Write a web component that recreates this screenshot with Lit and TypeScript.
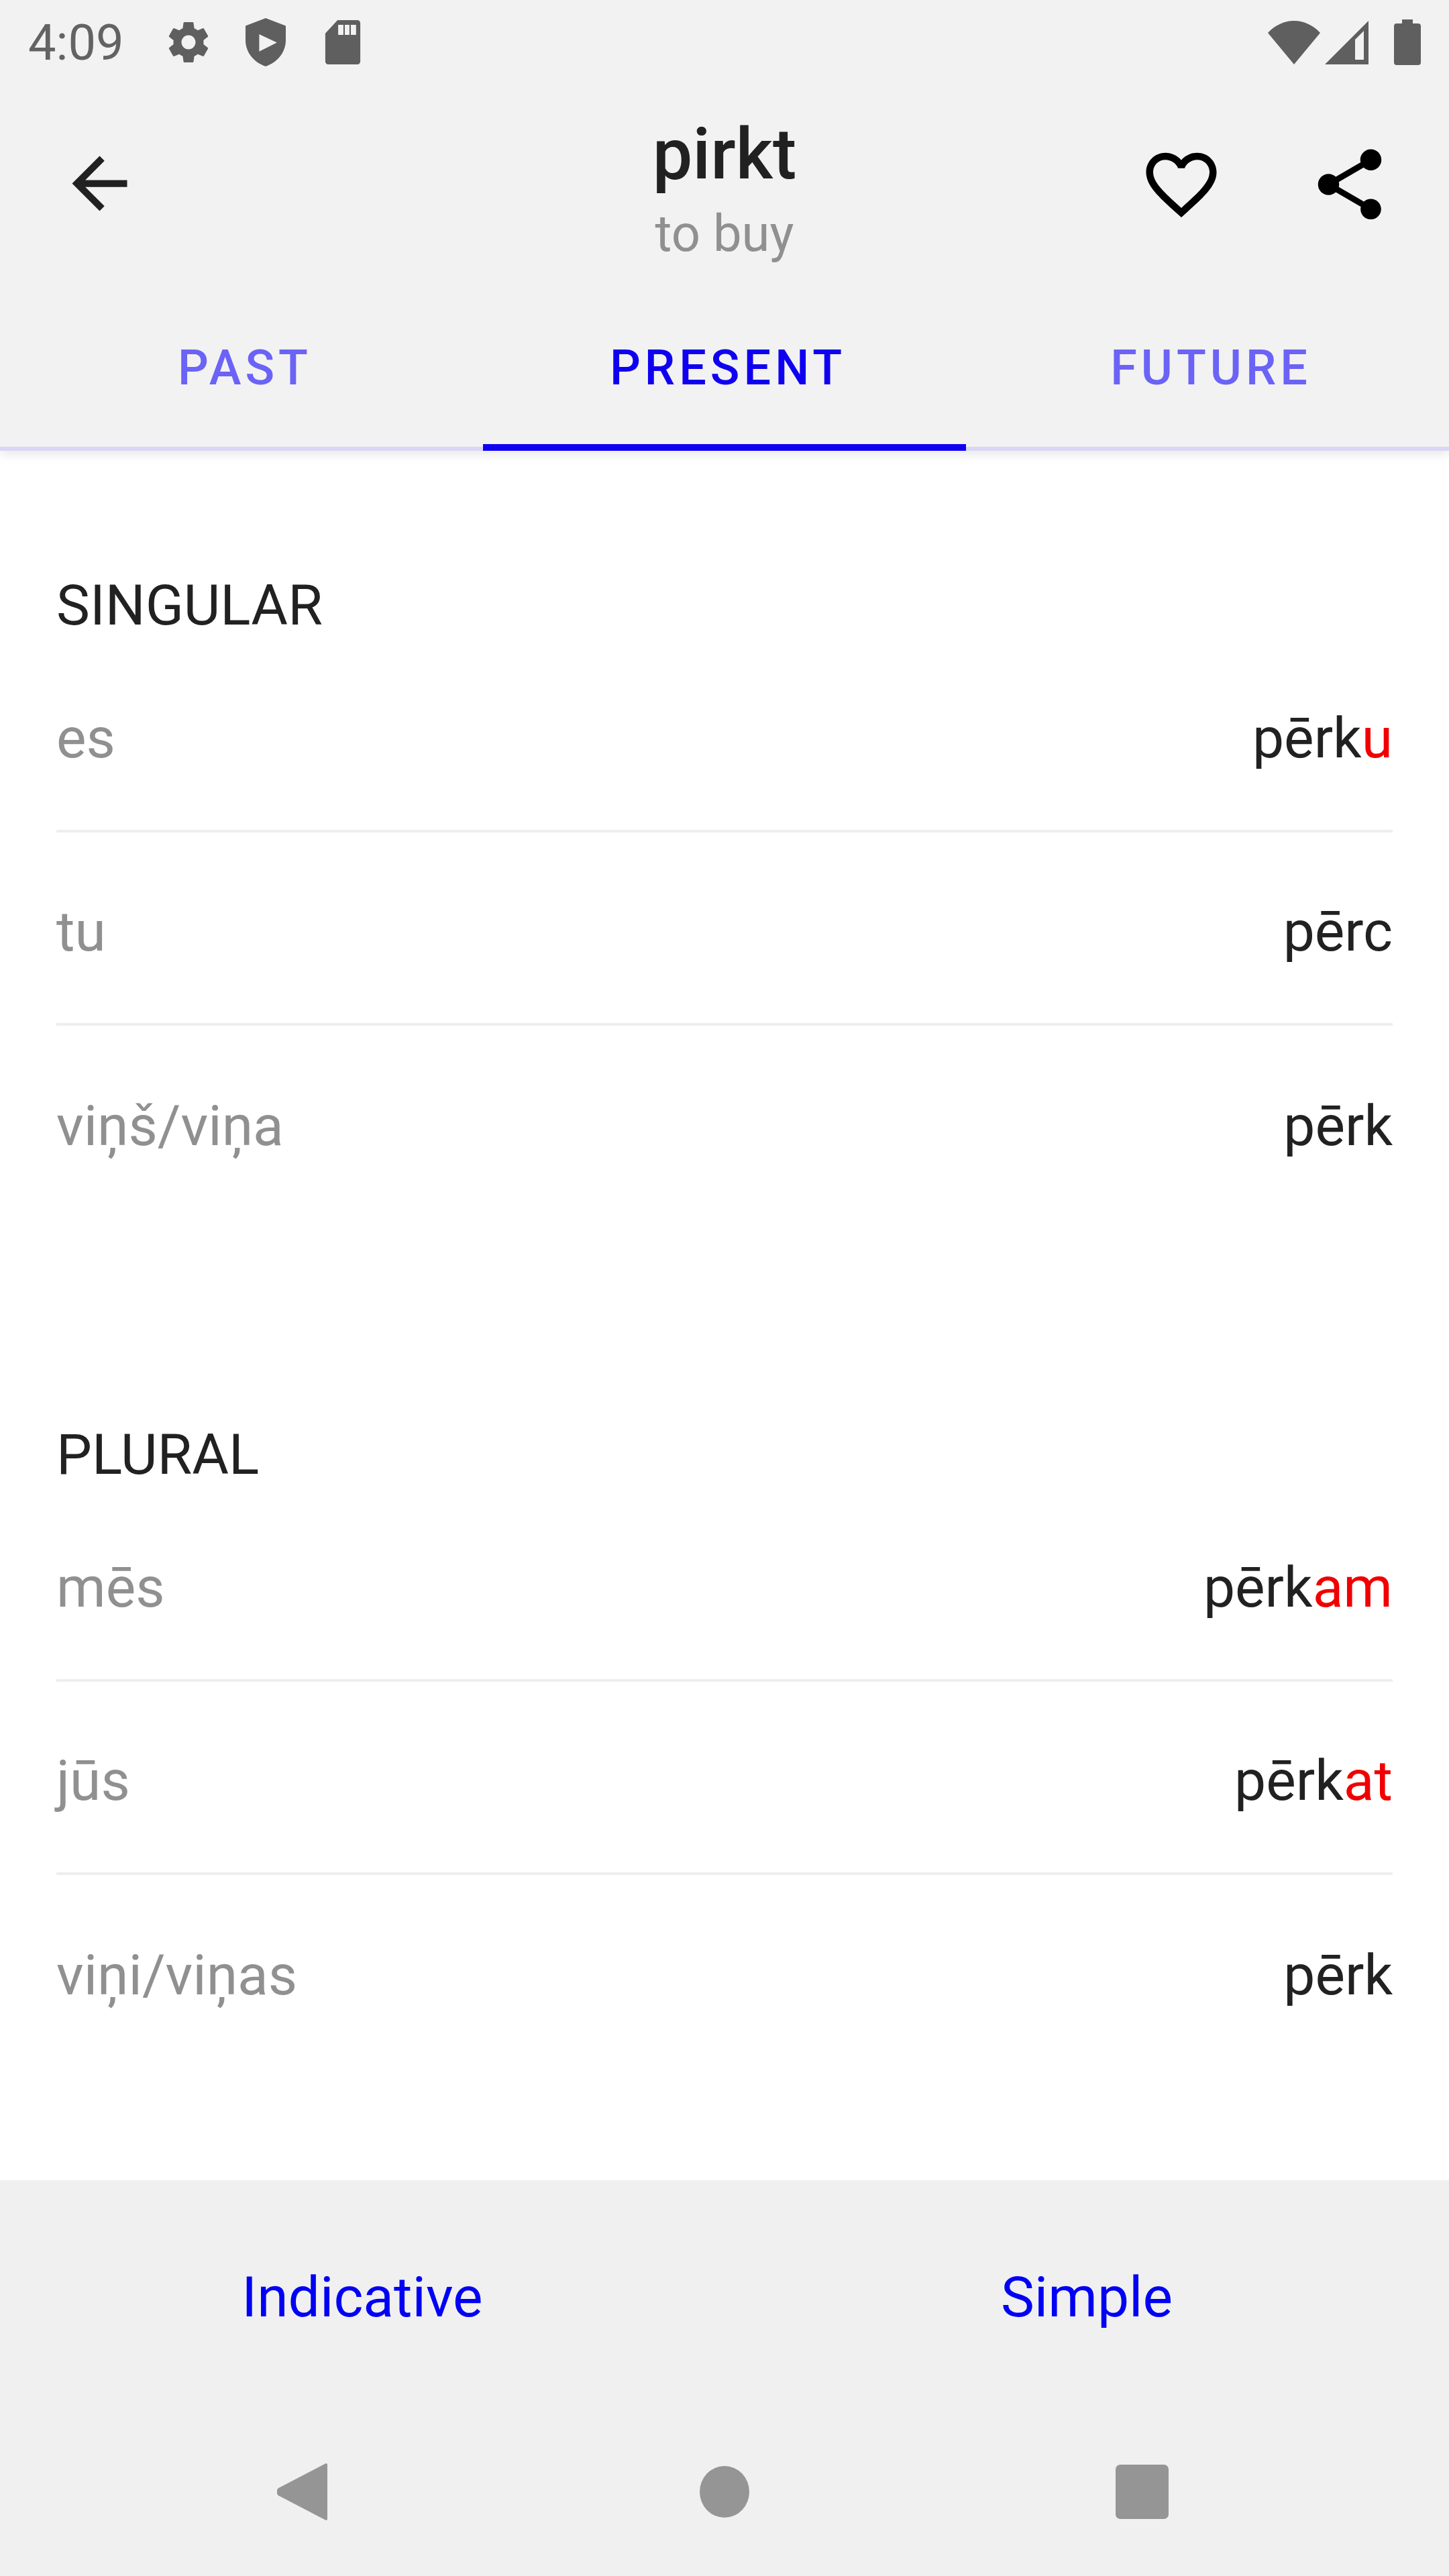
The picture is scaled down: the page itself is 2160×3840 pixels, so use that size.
import { LitElement, html, css, svg } from "lit";
import { customElement } from "lit/decorators.js";

type Row = { who: string; stem: string; end?: string };

const SINGULAR: Row[] = [
  { who: "es", stem: "pērk", end: "u" },
  { who: "tu", stem: "pērc" },
  { who: "viņš/viņa", stem: "pērk" },
];

const PLURAL: Row[] = [
  { who: "mēs", stem: "pērk", end: "am" },
  { who: "jūs", stem: "pērk", end: "at" },
  { who: "viņi/viņas", stem: "pērk" },
];

const GEAR =
  "M19.43 12.98c.04-.32.07-.64.07-.98s-.03-.66-.07-.98l2.11-1.65c.19-.15.24-.42.12-.64l-2-3.46c-.12-.22-.39-.3-.61-.22l-2.49 1c-.52-.4-1.08-.73-1.69-.98l-.38-2.65C14.46 2.18 14.25 2 14 2h-4c-.25 0-.46.18-.49.42l-.38 2.65c-.61.25-1.17.59-1.69.98l-2.49-1c-.23-.09-.49 0-.61.22l-2 3.46c-.13.22-.07.49.12.64l2.11 1.65c-.04.32-.07.65-.07.98s.03.66.07.98l-2.11 1.65c-.19.15-.24.42-.12.64l2 3.46c.12.22.39.3.61.22l2.49-1c.52.4 1.08.73 1.69.98l.38 2.65c.03.24.24.42.49.42h4c.25 0 .46-.18.49-.42l.38-2.65c.61-.25 1.17-.59 1.69-.98l2.49 1c.23.09.49 0 .61-.22l2-3.46c.12-.22.07-.49-.12-.64l-2.11-1.65zM12 15.5c-1.93 0-3.5-1.57-3.5-3.5s1.57-3.5 3.5-3.5 3.5 1.57 3.5 3.5-1.57 3.5-3.5 3.5z";
const SHIELD = "M12 0L22 3.8V11C22 17 17.8 22 12 24C6.2 22 2 17 2 11V3.8ZM8.8 8V16.6L17.6 12.2Z";
const SD =
  "M9.4 1H19.2C20.1 1 20.7 1.6 20.7 2.5V21.5C20.7 22.4 20.1 23 19.2 23H4.8C3.9 23 3.3 22.4 3.3 21.5V7.6ZM9.7 3.3V8.3H12.3V3.3ZM13 3.3V8.3H15.3V3.3ZM16 3.3V8.3H18.6V3.3Z";
const BACK = "M20 11H7.83l5.59-5.59L12 4l-8 8 8 8 1.41-1.41L7.83 13H20v-2z";
const HEART =
  "M16.5 3c-1.74 0-3.41.81-4.5 2.09C10.91 3.81 9.24 3 7.5 3 4.42 3 2 5.42 2 8.5c0 3.78 3.4 6.86 8.55 11.54L12 21.35l1.45-1.32C18.6 15.36 22 12.28 22 8.5 22 5.42 19.58 3 16.5 3zm-4.4 15.55l-.1.1-.1-.1C7.14 14.24 4 11.39 4 8.5 4 6.5 5.5 5 7.5 5c1.54 0 3.04.99 3.57 2.36h1.87C13.46 5.99 14.96 5 16.5 5c2 0 3.5 1.5 3.5 3.5 0 2.89-3.14 5.74-7.9 10.05z";
const SHARE =
  "M18 16.08c-.76 0-1.44.3-1.96.77L8.91 12.7c.05-.23.09-.46.09-.7s-.04-.47-.09-.7l7.05-4.11c.54.5 1.25.81 2.04.81 1.66 0 3-1.34 3-3s-1.34-3-3-3-3 1.34-3 3c0 .24.04.47.09.7L8.04 9.81C7.5 9.31 6.79 9 6 9c-1.66 0-3 1.34-3 3s1.34 3 3 3c.79 0 1.5-.31 2.04-.81l7.12 4.16c-.05.21-.08.43-.08.65 0 1.61 1.31 2.92 2.92 2.92 1.61 0 2.92-1.31 2.92-2.92s-1.31-2.92-2.92-2.92z";

const icon = (d: string, cls: string) =>
  html`<svg class=${cls} viewBox="0 0 24 24">${svg`<path fill-rule="evenodd" d=${d}></path>`}</svg>`;

@customElement("app-root")
export class AppRoot extends LitElement {
  static styles = css`
    :host {
      display: flex;
      flex-direction: column;
      width: 2160px;
      height: 3840px;
      background: #fff;
      font-family: Roboto, sans-serif;
      color: #212121;
    }

    header {
      background: #f2f2f2;
      box-shadow: 0 6px 14px rgba(0, 0, 0, 0.09);
    }

    .status {
      display: flex;
      align-items: center;
      height: 126px;
      padding: 0 42px;
      fill: #5f5f5f;
    }
    .time {
      font-size: 74px;
      font-weight: 400;
      color: #636363;
      width: 203px;
    }
    .sys {
      width: 72px;
      height: 72px;
      margin-right: 43px;
    }
    .spacer {
      flex: 1;
    }
    .wifi {
      width: 78px;
      height: 65px;
      margin-right: 7px;
    }
    .signal {
      width: 65px;
      height: 65px;
      margin-right: 38px;
    }
    .battery {
      width: 40px;
      height: 68px;
    }

    .toolbar {
      display: grid;
      grid-template-columns: 1fr auto 1fr;
      align-items: center;
      height: 298px;
    }
    .back {
      width: 123px;
      height: 123px;
      margin-left: 87px;
      fill: #212121;
    }
    .title {
      display: flex;
      flex-direction: column;
      align-items: center;
      padding-top: 28px;
    }
    .word {
      font-size: 106px;
      font-weight: 500;
      line-height: 118px;
    }
    .gloss {
      font-size: 76px;
      line-height: 118px;
      color: #909090;
    }
    .actions {
      display: flex;
      justify-content: flex-end;
      gap: 125px;
      padding-right: 85px;
    }
    .action {
      width: 126px;
      height: 126px;
      fill: #000;
    }

    .tabs {
      display: grid;
      grid-template-columns: repeat(3, 1fr);
    }
    .tab {
      display: flex;
      align-items: center;
      justify-content: center;
      box-sizing: border-box;
      height: 248px;
      padding: 10px 0 4px 10px;
      border-bottom: 6px solid #dad6f5;
      font-size: 72px;
      font-weight: 500;
      letter-spacing: 6px;
      color: #6b63f6;
    }
    .tab.active {
      padding-bottom: 0;
      border-bottom: 10px solid #0f00f0;
      color: #0f00f0;
    }

    main {
      flex: 1;
      min-height: 0;
      padding: 181px 84px 0;
    }
    section + section {
      margin-top: 302px;
    }
    h2 {
      margin: 0;
      font-size: 84px;
      font-weight: 400;
      line-height: 100px;
    }
    .row {
      display: flex;
      align-items: center;
      justify-content: space-between;
      box-sizing: border-box;
      height: 288px;
      padding-top: 10px;
      font-size: 84px;
      border-bottom: 4px solid #eeeeee;
    }
    .row:last-child {
      border-bottom: none;
    }
    .who {
      color: #909090;
    }
    .end {
      color: #f00000;
    }

    footer {
      background: #f0f0f0;
    }
    .modes {
      display: grid;
      grid-template-columns: 1fr 1fr;
      height: 344px;
      padding-top: 4px;
      box-sizing: border-box;
      align-items: center;
      text-align: center;
      font-size: 84px;
      color: #0000f5;
    }
    .nav {
      display: grid;
      grid-template-columns: 630px 620px auto;
      align-items: center;
      height: 246px;
      padding: 0 0 6px 413px;
      box-sizing: border-box;
      fill: #959595;
    }
    .nav svg {
      display: block;
    }
    .nav-back {
      width: 75px;
      height: 85px;
    }
    .nav-home {
      width: 74px;
      height: 77px;
    }
    .nav-recent {
      width: 79px;
      height: 81px;
    }
  `;

  private renderRows(rows: Row[]) {
    return rows.map(
      (r) => html`
        <div class="row">
          <span class="who">${r.who}</span>
          <span>${r.stem}<span class="end">${r.end ?? ""}</span></span>
        </div>
      `
    );
  }

  render() {
    return html`
      <header>
        <div class="status">
          <span class="time">4:09</span>
          ${icon(GEAR, "sys")} ${icon(SHIELD, "sys")} ${icon(SD, "sys")}
          <span class="spacer"></span>
          <svg class="wifi" viewBox="0 0 78 65">
            <path d="M39 65L0 18C10 7 24 0 39 0C54 0 68 7 78 18Z"></path>
          </svg>
          <svg class="signal" viewBox="0 0 65 65">
            <path fill-rule="evenodd" d="M65 0V65H0ZM45 28V58H58V15Z"></path>
          </svg>
          <svg class="battery" viewBox="0 0 40 68">
            <path
              d="M12 0H28V6H36A4 4 0 0 1 40 10V64A4 4 0 0 1 36 68H4A4 4 0 0 1 0 64V10A4 4 0 0 1 4 6H12Z"
            ></path>
          </svg>
        </div>
        <div class="toolbar">
          <div>${icon(BACK, "back")}</div>
          <div class="title">
            <span class="word">pirkt</span>
            <span class="gloss">to buy</span>
          </div>
          <div class="actions">${icon(HEART, "action")} ${icon(SHARE, "action")}</div>
        </div>
        <div class="tabs">
          <div class="tab">PAST</div>
          <div class="tab active">PRESENT</div>
          <div class="tab">FUTURE</div>
        </div>
      </header>
      <main>
        <section>
          <h2>SINGULAR</h2>
          ${this.renderRows(SINGULAR)}
        </section>
        <section>
          <h2>PLURAL</h2>
          ${this.renderRows(PLURAL)}
        </section>
      </main>
      <footer>
        <div class="modes">
          <span>Indicative</span>
          <span>Simple</span>
        </div>
        <div class="nav">
          <svg class="nav-back" viewBox="0 0 75 85">
            <path d="M73 0C74 0 75 1 75 2V83C75 84 74 85 73 85L2 48C-1 46 -1 39 2 37Z"></path>
          </svg>
          <svg class="nav-home" viewBox="0 0 74 77">
            <ellipse cx="37" cy="38.5" rx="37" ry="38.5"></ellipse>
          </svg>
          <svg class="nav-recent" viewBox="0 0 79 81">
            <rect width="79" height="81" rx="7"></rect>
          </svg>
        </div>
      </footer>
    `;
  }
}
